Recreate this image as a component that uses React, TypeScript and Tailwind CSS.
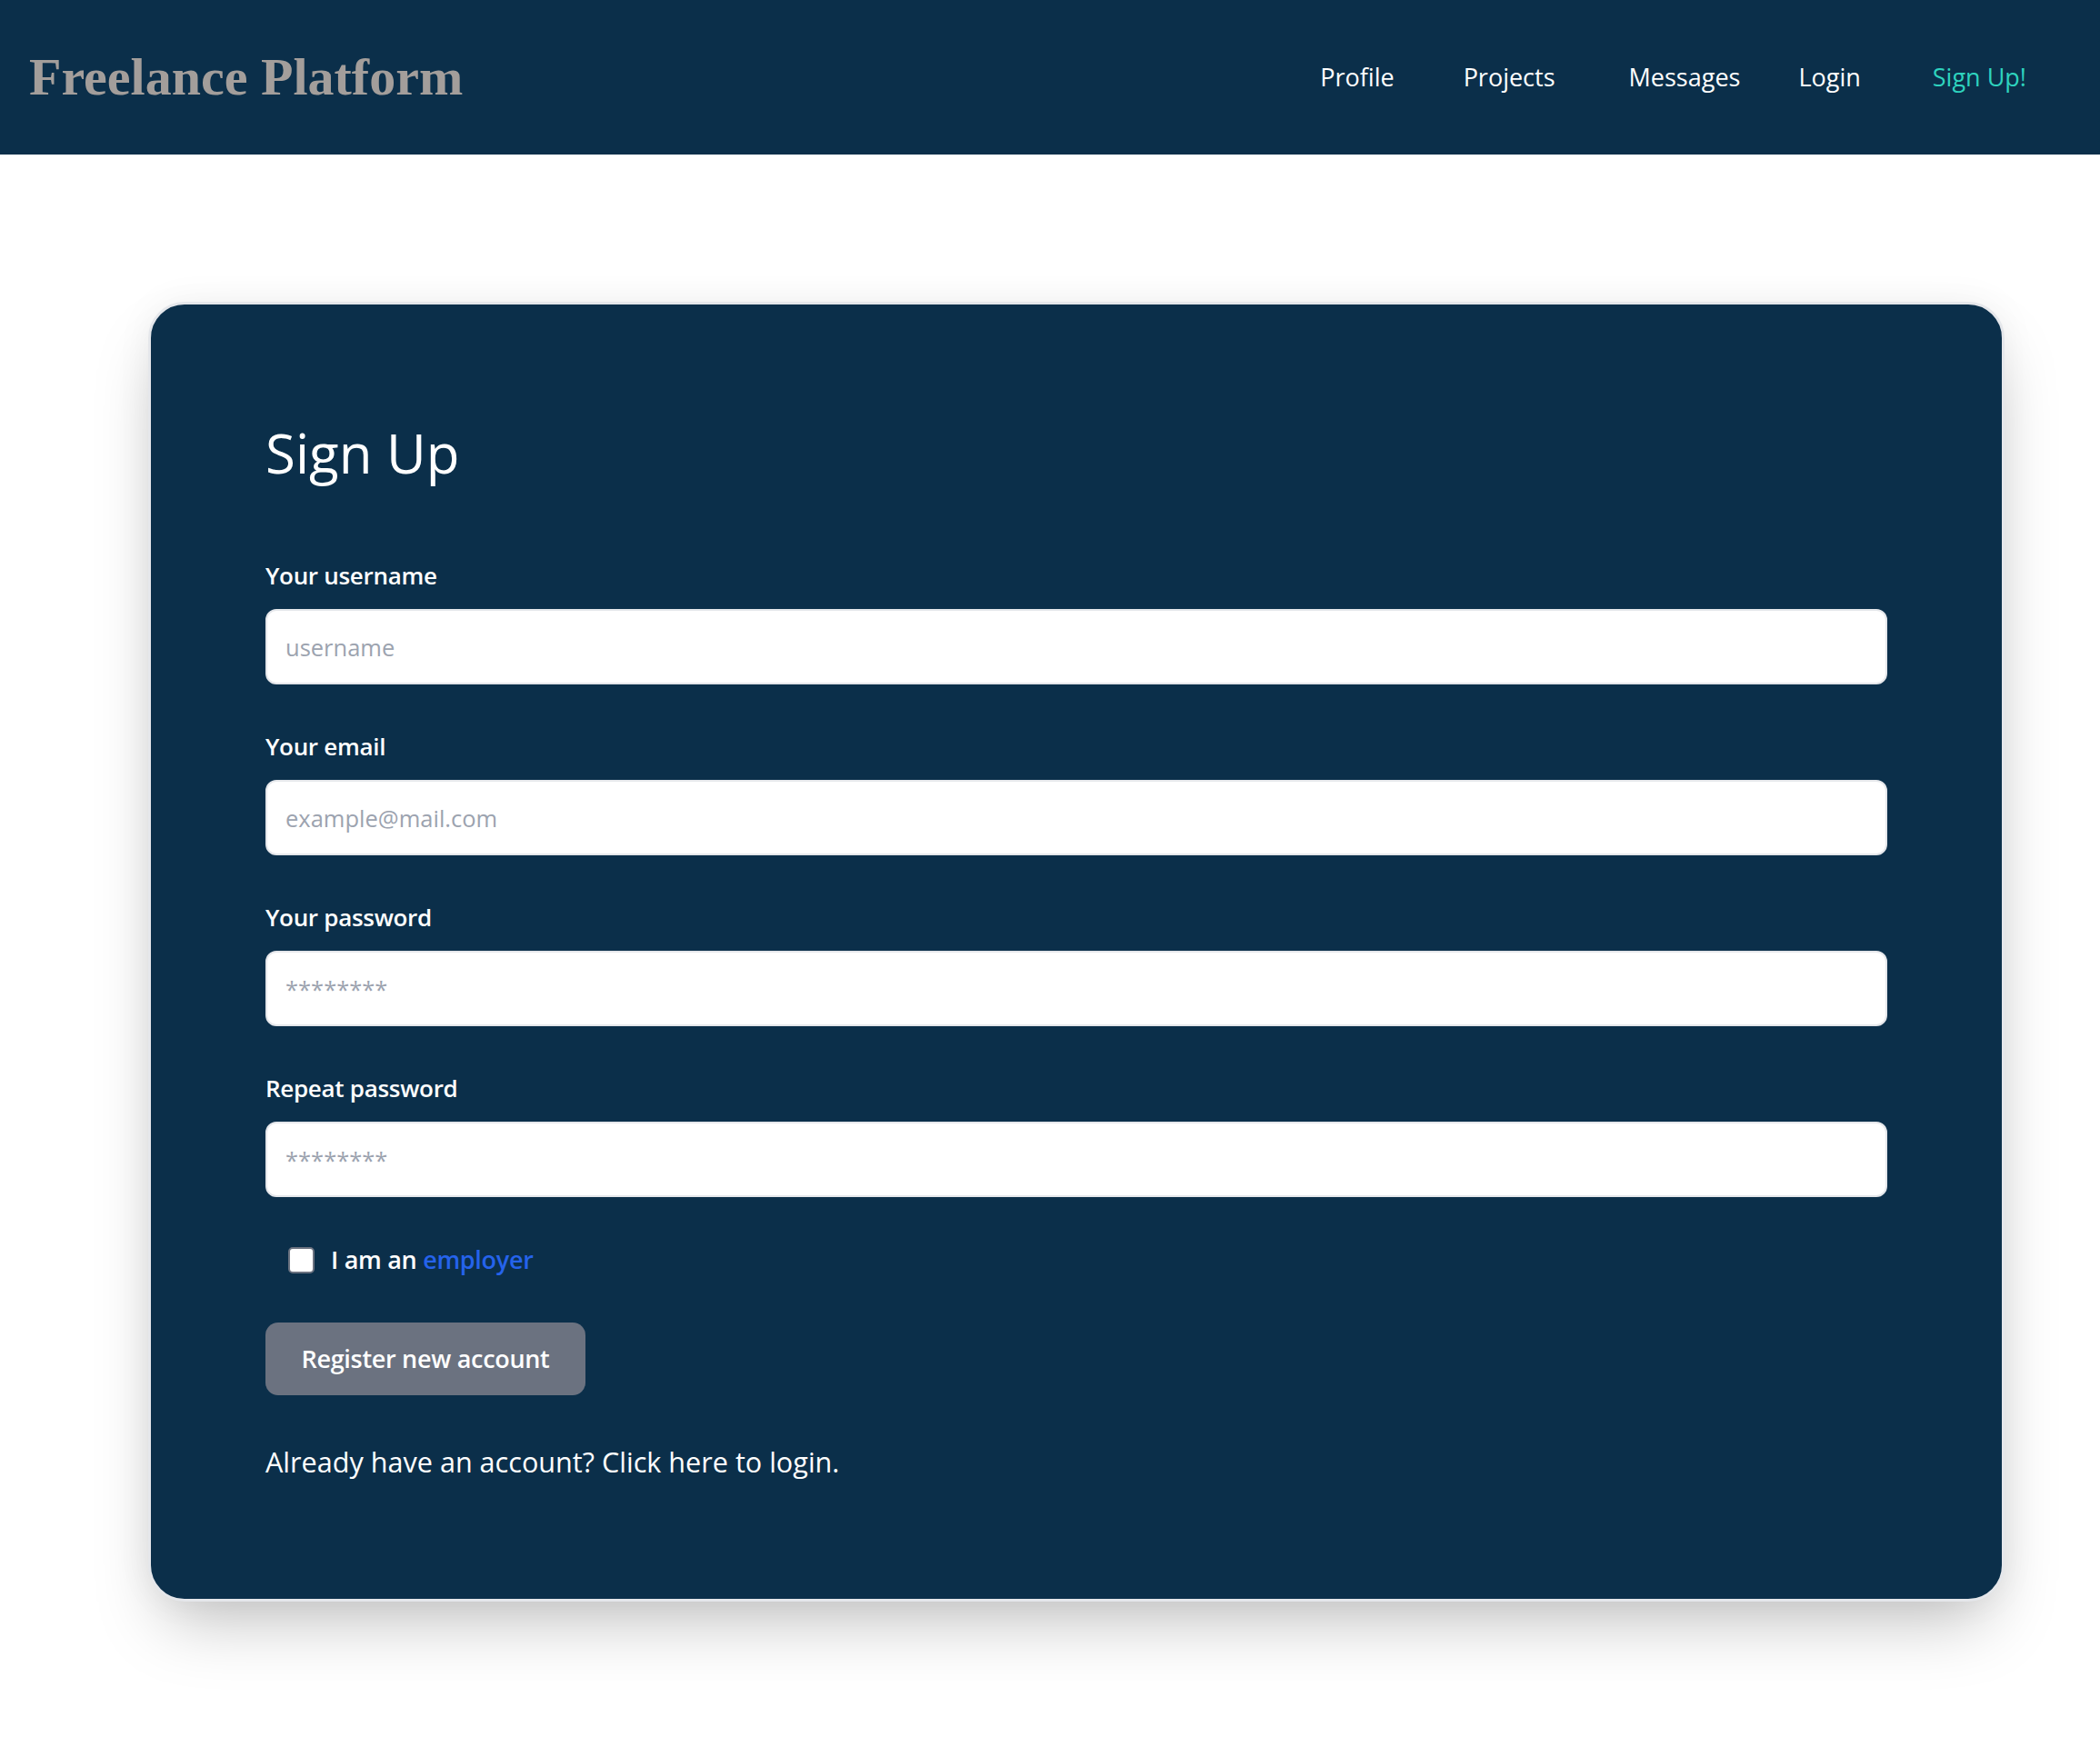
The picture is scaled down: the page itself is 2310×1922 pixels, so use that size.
import React from "react";

const sans = { fontFamily: '"Open Sans", "Noto Sans", sans-serif' };

function Field({ label, placeholder, type = "text" }: { label: string; placeholder: string; type?: string }) {
  return (
    <div className="flex flex-col">
      <label className="text-[26px] leading-[36px] font-semibold text-white tracking-[-0.3px]">{label}</label>
      <input
        type={type}
        placeholder={placeholder}
        className="mt-[19px] h-[83px] w-full rounded-[12px] border-2 border-[#e5e7eb] bg-white px-[20px] text-[25.5px] text-gray-900 placeholder:text-[#9ca3af] outline-none"
      />
    </div>
  );
}

export default function App() {
  return (
    <div className="min-h-[1922px] w-full bg-white" style={sans}>
      <header className="flex h-[170px] items-center justify-between bg-[#0b2f4a] pl-[32px] pr-[81px]">
        <div
          className="text-[58px] font-bold leading-none text-[#a39e9b]"
          style={{ fontFamily: '"Liberation Serif", "Times New Roman", serif' }}
        >
          Freelance Platform
        </div>
        <nav className="-mt-[2px] flex items-center text-[27px] leading-none text-white">
          <a className="mr-[76px]">Profile</a>
          <a className="mr-[81px]">Projects</a>
          <a className="mr-[64px]">Messages</a>
          <a className="mr-[79px]">Login</a>
          <a className="text-[#2ed3be]">Sign Up!</a>
        </nav>
      </header>

      <main className="pl-[163px] pr-[105px] pt-[162px] pb-[164px]">
        <div className="rounded-[40px] border-[3px] border-[#e5e7eb] bg-[#0b2f4a] px-[126px] pt-[133px] pb-[131px] shadow-[0_37px_75px_-18px_rgba(0,0,0,0.25),0_0_40px_rgba(0,0,0,0.05)]">
          <h1 className="text-[60px] leading-[60px] font-normal text-white">Sign Up</h1>

          <div className="mt-[87px] flex flex-col gap-[50px]">
            <Field label="Your username" placeholder="username" />
            <Field label="Your email" placeholder="example@mail.com" type="email" />
            <Field label="Your password" placeholder="********" type="password" />
            <Field label="Repeat password" placeholder="********" type="password" />
          </div>

          <label className="mt-[51px] ml-[25px] flex h-[36px] items-center">
            <span className="h-[29px] w-[29px] rounded-[5px] border-2 border-[#6b7280] bg-white" />
            <span className="ml-[18px] text-[27px] leading-[36px] font-semibold text-white tracking-[-0.3px]">
              I am an <span className="text-[#2563eb]">employer</span>
            </span>
          </label>

          <button className="mt-[51px] flex h-[80px] w-[352px] items-center justify-center rounded-[14px] bg-[#6b7280] text-[27px] font-semibold text-white tracking-[-0.3px]">
            Register new account
          </button>

          <p className="mt-[53px] text-[30.6px] leading-[40px] text-white">
            Already have an account? Click here to login.
          </p>
        </div>
      </main>
    </div>
  );
}
